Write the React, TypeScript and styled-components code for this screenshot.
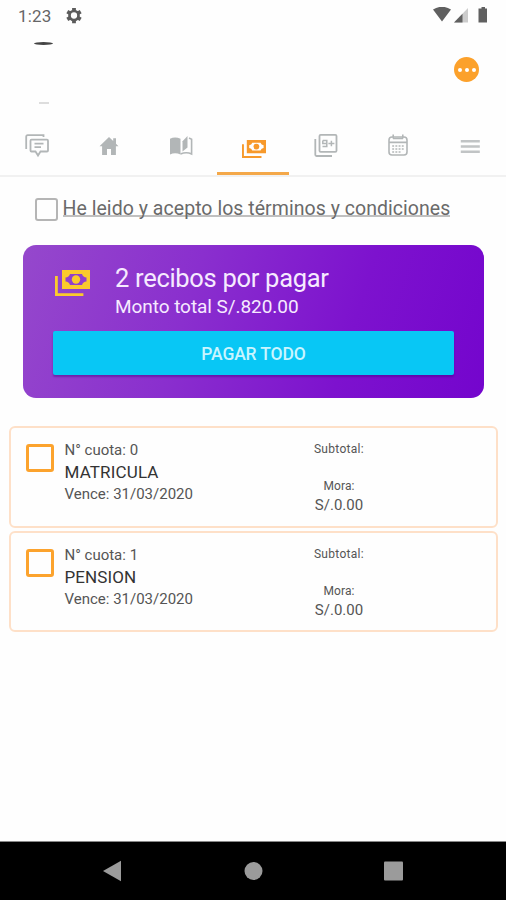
import React from "react";
import styled, { createGlobalStyle } from "styled-components";

const Global = createGlobalStyle`
  * { box-sizing: border-box; }
  body { margin: 0; background: #fefefe; font-family: Roboto, sans-serif; }
  svg { display: block; flex: none; }
`;

const Screen = styled.div`
  width: 506px;
  height: 900px;
  display: flex;
  flex-direction: column;
  background: #fefefe;
  overflow: hidden;
`;

const StatusBar = styled.div`
  height: 32px;
  display: flex;
  align-items: center;
  padding: 0 16px 0 18px;
`;

const Clock = styled.span`
  width: 48px;
  font-size: 17px;
  line-height: 32px;
  letter-spacing: 0.2px;
  color: #666;
`;

const StatusIcons = styled.div`
  margin-left: auto;
  display: flex;
`;

const Header = styled.header`
  height: 86px;
  display: flex;
  justify-content: space-between;
  padding: 10px 27px 0 34px;
`;

const Avatar = styled.div`
  display: flex;
  flex-direction: column;
  justify-content: space-between;
  align-items: center;
  width: 19px;
  height: 62px;
`;

const AvatarArc = styled.div`
  width: 19px;
  height: 3px;
  border-radius: 50%;
  background: #444;
`;

const AvatarEdge = styled.div`
  width: 10px;
  height: 2px;
  background: #ddd;
`;

const MoreButton = styled.button`
  display: flex;
  align-items: center;
  justify-content: center;
  gap: 3px;
  width: 25px;
  height: 25px;
  margin-top: 15px;
  padding: 0;
  border: 0;
  border-radius: 50%;
  background: #fca12b;
`;

const Dot = styled.i`
  width: 4px;
  height: 4px;
  border-radius: 50%;
  background: #fff;
`;

const Tabs = styled.nav`
  height: 59px;
  display: grid;
  grid-template-columns: repeat(7, 1fr);
  border-bottom: 2px solid #f1f1f1;
`;

const Tab = styled.div<{ $active?: boolean }>`
  display: flex;
  justify-content: center;
  padding: 15px 0 0 1px;
  height: 57px;
  color: ${(p) => (p.$active ? "#f7992b" : "#b2b6b7")};
  border-bottom: ${(p) => (p.$active ? "3px solid #f4a849" : "0")};
`;

const CashTab = styled.div`
  padding: 7px 0 0 1px;
`;

const Terms = styled.div`
  height: 68px;
  display: flex;
  padding: 21px 0 0 35px;
`;

const Checkbox = styled.span<{ $size: number; $color: string; $stroke: number }>`
  flex: none;
  width: ${(p) => p.$size}px;
  height: ${(p) => p.$size}px;
  border: ${(p) => p.$stroke}px solid ${(p) => p.$color};
  border-radius: 3px;
`;

const TermsLink = styled.a`
  margin: -1px 0 0 4.5px;
  height: 20px;
  font-size: 19.5px;
  line-height: 23px;
  letter-spacing: 0.04px;
  white-space: nowrap;
  color: #6a6a6a;
  border-bottom: 2px solid #c0c0c0;
`;

const PayCard = styled.section`
  height: 153px;
  margin: 0 22px 0 23px;
  padding: 18px 30px 0 30px;
  border-radius: 13px;
  background: linear-gradient(107deg, #9548cc 0%, #8a2fce 36%, #7d12ce 70%, #7405cd 100%);
`;

const Summary = styled.div`
  display: flex;
  height: 68px;
  padding-left: 2px;
`;

const IconSlot = styled.div`
  width: 60px;
  padding-top: 7px;
  color: #fbca2c;
`;

const Title = styled.h1`
  margin: 0;
  font-size: 25.5px;
  font-weight: 400;
  line-height: 30px;
  letter-spacing: -0.3px;
  color: #f6eaff;
`;

const Amount = styled.p`
  margin: 1px 0 0;
  font-size: 19px;
  line-height: 26px;
  letter-spacing: -0.06px;
  color: #f6eaff;
`;

const PayButton = styled.button`
  display: block;
  width: 401px;
  height: 44px;
  padding: 1px 0 0;
  border: 0;
  border-radius: 2px;
  background: #08c7f5;
  box-shadow: 0 2px 2px rgba(70, 0, 130, 0.45);
  font: 500 17.5px Roboto, sans-serif;
  letter-spacing: -0.15px;
  color: #c9f5ff;
`;

const Receipts = styled.div`
  display: flex;
  flex-direction: column;
  gap: 3px;
  padding: 28px 8px 0 9px;
  flex: 1;
`;

const Receipt = styled.article`
  height: 101.5px;
  display: flex;
  padding: 16px 0 0 15px;
  border: 2px solid #fee0c8;
  border-radius: 6px;
`;

const Details = styled.div`
  width: 252px;
  padding-left: 10.5px;
  margin-top: -5px;
`;

const Charges = styled.div`
  width: 66px;
  text-align: center;
  margin-top: -6px;
`;

const Line = styled.div<{ $size: number; $color?: string; $spacing?: number; $height?: number }>`
  font-size: ${(p) => p.$size}px;
  height: ${(p) => p.$height ?? 22}px;
  line-height: 22px;
  letter-spacing: ${(p) => p.$spacing ?? 0}px;
  color: ${(p) => p.$color ?? "#555"};
  white-space: nowrap;
`;

const SystemNav = styled.footer`
  height: 59px;
  display: flex;
  justify-content: space-between;
  padding: 18px 102px 0;
  background: #000;
  border-top: 1px solid #888;
`;

const GearIcon = () => (
  <svg width="16" height="16" viewBox="0 0 16 16">
    <circle cx="8" cy="7.5" r="4.5" fill="none" stroke="#5c5c5c" strokeWidth="2.7" />
    <path
      d="M8-.2v3M8 12.2v3M1.3 3.65l2.6 1.5M12.1 9.85l2.6 1.5M1.3 11.35l2.6-1.5M12.1 5.15l2.6-1.5"
      stroke="#5c5c5c"
      strokeWidth="3.8"
    />
  </svg>
);

const SystemStatus = () => (
  <svg width="58" height="18" viewBox="0 0 58 18">
    <path d="M1 2.5Q10-3 19 2.5L10 14.5Z" fill="#606060" />
    <path d="M36 1v14.5H22Z" fill="#ccc" />
    <path d="M30.5 6.7v8.8H22Z" fill="#606060" />
    <path d="M49.5 0h3.5v1.5h2V15.5h-8.5V1.5h3Z" fill="#606060" />
  </svg>
);

const MessagesIcon = () => (
  <svg width="26" height="26" viewBox="0 0 26 26" fill="none" stroke="currentColor" strokeWidth="1.8">
    <path d="M2.2 16V3.7Q2.200 2.200 3.700 2.200H19.500V4" />
    <path d="M7.500 6.700h15.500q1 0 1 1v9.800q0 1-1 1h-6.500L14 22.500l-2.500-4H7.500q-1 0-1-1V7.700q0-1 1-1ZM10.500 10.700h9M10.500 14.200h6.500" />
  </svg>
);

const HomeIcon = () => (
  <svg width="24" height="26" viewBox="0 0 24 26" fill="currentColor">
    <path d="M10 22v-6h4v6h4.900v-8.800H21.500L19 10.700V5.200h-2.800V8L12 4 2.500 13.200h2.600V22Z" />
  </svg>
);

const BookIcon = () => (
  <svg width="26" height="26" viewBox="0 0 26 26" fill="currentColor">
    <path d="M2 5.800Q7 3 12.500 5.800V21.500Q7 19 2 21.500Z" />
    <path d="M14.500 8.200 19.500 3V14.500L14.500 18.500Z" />
    <path d="M12.500 21Q18.500 18.500 23.600 21V6.200L21 5" fill="none" stroke="currentColor" strokeWidth="1.600" />
  </svg>
);

const CashIcon = ({ width, height }: { width: number; height: number }) => (
  <svg width={width} height={height} viewBox="0 0 35 26" preserveAspectRatio="none">
    <path d="M1.4 6v18.6h27" fill="none" stroke="currentColor" strokeWidth="2.8" />
    <path
      fill="currentColor"
      fillRule="evenodd"
      d="M7 0h28v19H7ZM15 4a5 5 0 0 1-4.5 3.5v4A5 5 0 0 1 15 15h12a5 5 0 0 1 4.5-3.5v-4A5 5 0 0 1 27 4Z"
    />
    <circle cx="21" cy="9.5" r="4.2" fill="currentColor" />
  </svg>
);

const NineIcon = () => (
  <svg width="26" height="26" viewBox="0 0 26 26" fill="none" stroke="currentColor" strokeWidth="1.8">
    <path d="M2.3 6v15.8q0 1.200 1.200 1.200H19" />
    <rect x="6.500" y="1.900" width="17" height="17" rx="1.200" />
    <path d="M9.800 7.500h4v6.100H9.500M13.800 10.500h-4V7.500M15.400 10.500h6M18.400 7.700v5.600" strokeWidth="1.500" />
  </svg>
);

const CalendarIcon = () => (
  <svg width="22" height="26" viewBox="0 0 22 26" fill="none" stroke="currentColor">
    <rect x="2" y="4" width="18" height="18" rx="3" strokeWidth="1.600" />
    <path d="M2 9.400h18M6.200 1.400v4M15.800 1.400v4M6 5.500h10" strokeWidth="1.600" />
    <path d="M5.200 13h12M5.200 16h12M5.200 19h9" strokeWidth="1.700" strokeDasharray="1.9 1.3" />
  </svg>
);

const MenuIcon = () => (
  <svg width="20" height="26" viewBox="0 0 20 26" stroke="currentColor" strokeWidth="2.400">
    <path d="M.8 8.200h19M.8 13.500h19M.8 18.800h19" opacity=".8" />
  </svg>
);

const receipts = [
  { number: 0, concept: "MATRICULA", spacing: 0.15 },
  { number: 1, concept: "PENSION", spacing: 0.1 },
];

export default function App() {
  return (
    <Screen>
      <Global />
      <StatusBar>
        <Clock>1:23</Clock>
        <GearIcon />
        <StatusIcons>
          <SystemStatus />
        </StatusIcons>
      </StatusBar>
      <Header>
        <Avatar>
          <AvatarArc />
          <AvatarEdge />
        </Avatar>
        <MoreButton aria-label="Más">
          <Dot />
          <Dot />
          <Dot />
        </MoreButton>
      </Header>
      <Tabs>
        <Tab><MessagesIcon /></Tab>
        <Tab><HomeIcon /></Tab>
        <Tab><BookIcon /></Tab>
        <Tab $active>
          <CashTab><CashIcon width={24} height={18} /></CashTab>
        </Tab>
        <Tab><NineIcon /></Tab>
        <Tab><CalendarIcon /></Tab>
        <Tab><MenuIcon /></Tab>
      </Tabs>
      <Terms>
        <Checkbox $size={23} $color="#b5b5b5" $stroke={2} />
        <TermsLink>He leido y acepto los términos y condiciones</TermsLink>
      </Terms>
      <PayCard>
        <Summary>
          <IconSlot><CashIcon width={35} height={26} /></IconSlot>
          <div>
            <Title>2 recibos por pagar</Title>
            <Amount>Monto total S/.820.00</Amount>
          </div>
        </Summary>
        <PayButton>PAGAR TODO</PayButton>
      </PayCard>
      <Receipts>
        {receipts.map((r) => (
          <Receipt key={r.number}>
            <Checkbox $size={28} $color="#fca32d" $stroke={3} />
            <Details>
              <Line $size={15}>N° cuota: {r.number}</Line>
              <Line $size={17} $color="#333" $spacing={r.spacing}>{r.concept}</Line>
              <Line $size={15}>Vence: 31/03/2020</Line>
            </Details>
            <Charges>
              <Line $size={12} $height={37} $spacing={0.3}>Subtotal:</Line>
              <Line $size={12} $height={19} $spacing={0.1}>Mora:</Line>
              <Line $size={15}>S/.0.00</Line>
            </Charges>
          </Receipt>
        ))}
      </Receipts>
      <SystemNav>
        <svg width="20" height="22" viewBox="0 0 20 22"><path d="M1 11 19 .7v20.6Z" fill="#9b9b9b" /></svg>
        <svg width="20" height="22" viewBox="0 0 20 22"><circle cx="10.5" cy="11" r="9" fill="#9b9b9b" /></svg>
        <svg width="20" height="22" viewBox="0 0 20 22"><rect x="0" y="1.5" width="19" height="19" rx="1" fill="#9b9b9b" /></svg>
      </SystemNav>
    </Screen>
  );
}
